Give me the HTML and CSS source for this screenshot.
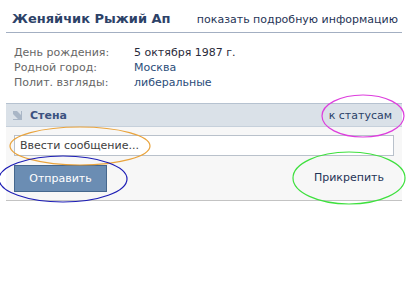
FILE: index.html
```html
<!DOCTYPE html>
<html lang="ru">
<head>
    <meta charset="UTF-8">
    <title>Профиль</title>
    <link rel="stylesheet" href="styles.css">
</head>
<body>
    <div class="page">
        <div class="profile-head">
            <h1>Женяйчик Рыжий Ап</h1>
            <a href="#" class="more-link">показать подробную информацию</a>
        </div>

        <div class="info">
            <div class="info-row"><span class="label">День рождения:</span><span class="value dark">5 октября 1987 г.</span></div>
            <div class="info-row"><span class="label">Родной город:</span><span class="value">Москва</span></div>
            <div class="info-row"><span class="label">Полит. взгляды:</span><span class="value">либеральные</span></div>
        </div>

        <div class="wall">
            <div class="wall-head">
                <svg class="wall-icon" width="11" height="11" viewBox="0 0 11 11">
                    <path d="M1 1 L5 1 L9 5 L9 1 L10 1 L10 10 L1 10 L1 9 L6 9 L1 4 Z" fill="#a9b6c6"/>
                </svg>
                <span class="wall-title">Стена</span>
                <a href="#" class="status-link">к статусам</a>
            </div>
            <div class="wall-body">
                <input type="text" class="wall-input" placeholder="Ввести сообщение...">
                <div class="wall-actions">
                    <button class="send-btn">Отправить</button>
                    <a href="#" class="attach-link">Прикрепить</a>
                </div>
            </div>
        </div>

        <!-- annotation marks drawn over the page -->
        <svg class="marks" width="408" height="293">
            <ellipse cx="80" cy="146" rx="70" ry="19" fill="none" stroke="#e9a33c" stroke-width="1.2"/>
            <ellipse cx="63" cy="179" rx="64" ry="23" fill="none" stroke="#1d1db5" stroke-width="1.2"/>
            <ellipse cx="363" cy="116" rx="41" ry="21" fill="none" stroke="#dd3ddd" stroke-width="1.2"/>
            <ellipse cx="349" cy="178" rx="56" ry="26" fill="none" stroke="#3ee03e" stroke-width="1.2"/>
        </svg>
    </div>
</body>
</html>
```

FILE: styles.css
```css
* {
    margin: 0;
    padding: 0;
    box-sizing: border-box;
}

body {
    background: #fff;
    font-family: "DejaVu Sans", Verdana, sans-serif;
    font-size: 11px;
    color: #000;
}

a {
    text-decoration: none;
    color: #2b4168;
}

.page {
    position: relative;
    width: 408px;
    height: 293px;
    padding: 0 6px;
}

/* Profile header */
.profile-head {
    display: flex;
    justify-content: space-between;
    align-items: flex-end;
    height: 33px;
    padding: 0 4px 6px 6px;
    border-bottom: 1px solid #a3afc2;
}

.profile-head h1 {
    font-size: 13px;
    font-weight: bold;
    color: #2d4268;
}

.more-link {
    font-size: 11px;
    color: #1f3456;
}

/* Info rows */
.info {
    padding: 12px 0 0 8px;
}

.info-row {
    display: flex;
    height: 15px;
    line-height: 15px;
}

.label {
    width: 120px;
    color: #666;
}

.value {
    color: #2b4d7a;
}

.value.dark {
    color: #2a2a3a;
}

/* Wall */
.wall {
    margin-top: 13px;
    border-bottom: 1px solid #c3c3c3;
}

.wall-head {
    display: flex;
    align-items: center;
    height: 24px;
    padding: 0 10px 0 6px;
    background: #dae1e8;
    border-top: 1px solid #b6c2d0;
    border-bottom: 1px solid #c6d0db;
}

.wall-icon {
    margin-right: 7px;
}

.wall-title {
    font-weight: bold;
    color: #3b5280;
}

.status-link {
    margin-left: auto;
    color: #2b4168;
}

.wall-body {
    background: #f7f7f7;
    padding: 8px 8px 8px 8px;
}

.wall-input {
    display: block;
    width: 380px;
    height: 21px;
    border: 1px solid #b9c1cb;
    background: #fff;
    padding: 0 5px;
    font-family: inherit;
    font-size: 11px;
}

.wall-input::placeholder {
    color: #404040;
}

.wall-actions {
    display: flex;
    align-items: center;
    justify-content: space-between;
    margin-top: 9px;
    padding-right: 10px;
}

.send-btn {
    width: 93px;
    height: 27px;
    background: #6b8db3;
    border: 1px solid #45678d;
    color: #fff;
    font-family: inherit;
    font-size: 11px;
}

.attach-link {
    color: #1f3456;
    margin-top: -3px;
}

/* Annotation overlay */
.marks {
    position: absolute;
    top: 0;
    left: 0;
    pointer-events: none;
}
```
